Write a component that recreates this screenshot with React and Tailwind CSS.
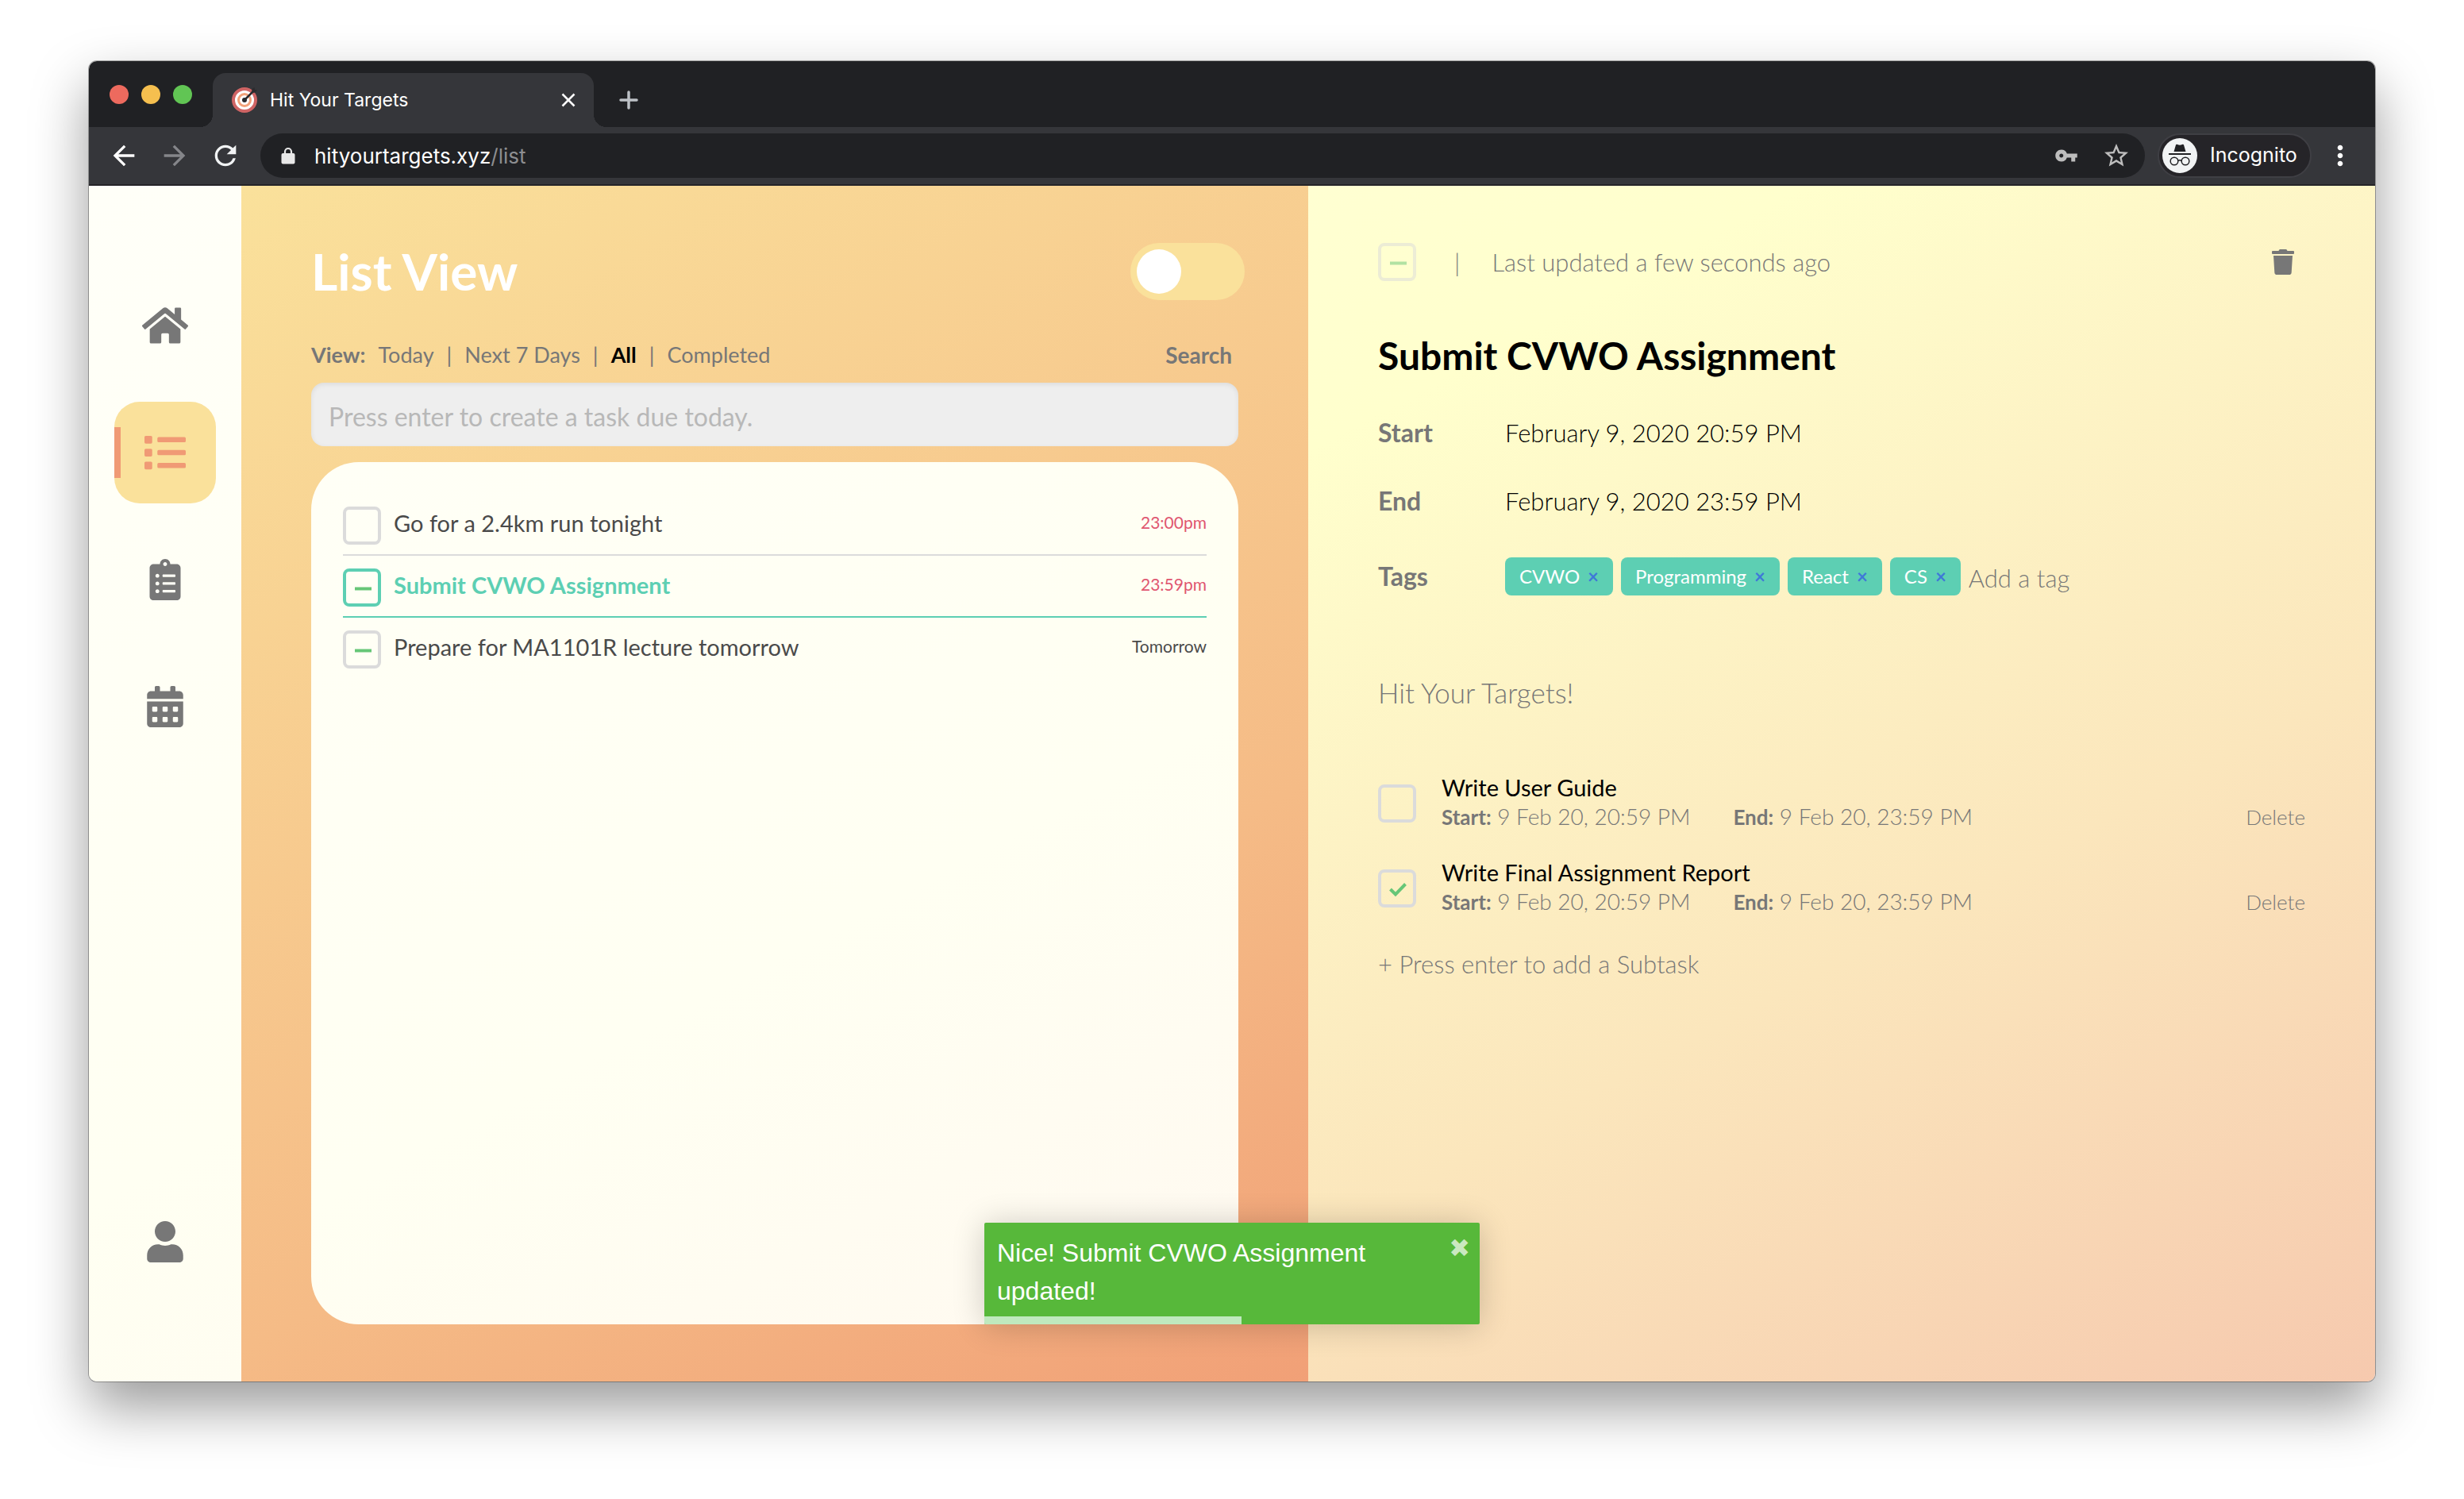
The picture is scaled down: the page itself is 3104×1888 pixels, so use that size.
import React, { useState } from "react";
import { FaHome, FaList, FaClipboardList, FaCalendarAlt, FaUser, FaTrash } from "react-icons/fa";
import { MdArrowBack, MdArrowForward, MdRefresh, MdVpnKey, MdStarBorder, MdMoreVert } from "react-icons/md";

const CHROME_FONT = "font-['Inter','Liberation_Sans',sans-serif]";

function TargetIcon() {
  return (
    <svg viewBox="0 0 32 32" className="size-8 overflow-visible" aria-hidden="true">
      <circle cx="16" cy="16" r="14" fill="#fff" stroke="#cf6464" strokeWidth="4" />
      <circle cx="16" cy="16" r="7.5" fill="#fff" stroke="#f2a27a" strokeWidth="3" />
      <circle cx="16" cy="16" r="3" fill="#2b2b2e" />
      <path d="M16 16L28 4" stroke="#2b2b2e" strokeWidth="2.5" />
      <path d="M25 7l.5-5L28.500 0l.5 3 3 .5-2.500 3z" fill="#2b2b2e" />
    </svg>
  );
}

function LockIcon() {
  return (
    <svg viewBox="0 0 18 22" className="h-[22px] w-[18px]" aria-hidden="true">
      <path d="M5 10V6a4 4 0 0 1 8 0v4" fill="none" stroke="#e8e8e8" strokeWidth="2.200" />
      <rect x="0.500" y="8" width="17" height="13.500" rx="2" fill="#e8e8e8" />
    </svg>
  );
}

function IncognitoIcon() {
  return (
    <svg viewBox="0 0 44 44" className="size-11" aria-hidden="true">
      <circle cx="22" cy="22" r="22" fill="#f1f3f4" />
      <path d="M17 8.500c.4-.8 1.200-.8 2-.4 2 .9 4 .9 6 0 .8-.4 1.600-.4 2 .4L29.500 17h-15z" fill="#202124" />
      <path d="M8 20h28" stroke="#202124" strokeWidth="1.800" />
      <circle cx="15" cy="29" r="4.800" fill="none" stroke="#202124" strokeWidth="1.500" />
      <circle cx="29" cy="29" r="4.800" fill="none" stroke="#202124" strokeWidth="1.500" />
      <path d="M19.800 28.500q2.200-1.500 4.400 0" fill="none" stroke="#202124" strokeWidth="1.500" />
    </svg>
  );
}

function TabStrip() {
  return (
    <div className="flex h-[83px] items-end bg-[#202124]">
      <div className="flex h-[68px] items-center gap-4 self-end pl-[26px]">
        <span className="-mt-[14px] size-6 rounded-full bg-[#ed6a5e]" />
        <span className="-mt-[14px] size-6 rounded-full bg-[#f5bf4f]" />
        <span className="-mt-[14px] size-6 rounded-full bg-[#61c554]" />
      </div>
      <div className="relative ml-[26px] flex h-[68px] w-[480px] items-center rounded-t-2xl bg-[#35363a] pl-6 pr-[22px] before:absolute before:-left-4 before:bottom-0 before:size-4 before:bg-[radial-gradient(circle_at_0_0,transparent_16px,#35363a_16px)] after:absolute after:-right-4 after:bottom-0 after:size-4 after:bg-[radial-gradient(circle_at_100%_0,transparent_16px,#35363a_16px)]">
        <TargetIcon />
        <span className="ml-4 flex-1 text-[23px] text-white">Hit Your Targets</span>
        <button aria-label="Close tab">
          <svg viewBox="0 0 20 20" className="size-5" stroke="#fff" strokeWidth="2.500">
            <path d="M2.500 2.500l15 15M17.500 2.500l-15 15" />
          </svg>
        </button>
      </div>
      <button aria-label="New tab" className="mb-[22px] ml-8">
        <svg viewBox="0 0 24 24" className="size-6" stroke="#bdc1c6" strokeWidth="3.500" strokeLinecap="round">
          <path d="M12 2v20M2 12h20" />
        </svg>
      </button>
    </div>
  );
}

function Toolbar() {
  return (
    <div className="flex h-[74px] items-center border-b-2 border-[#252428] bg-[#35363a] px-6">
      <div className="flex gap-6">
        <button aria-label="Back"><MdArrowBack className="size-10 text-white" /></button>
        <button aria-label="Forward"><MdArrowForward className="size-10 text-[#85868a]" /></button>
        <button aria-label="Reload"><MdRefresh className="size-10 text-[#f1f3f4]" /></button>
      </div>
      <div className="ml-6 flex h-14 flex-1 items-center rounded-full bg-[#202124] pl-[26px] pr-[18px]">
        <LockIcon />
        <span className="ml-6 flex-1 text-[26px] text-white">
          hityourtargets.xyz<span className="text-[#8d8e91]">/list</span>
        </span>
        <button aria-label="Saved passwords"><MdVpnKey className="size-[30px] text-[#bdbdbd]" /></button>
        <button aria-label="Bookmark" className="ml-[30px]"><MdStarBorder className="size-9 text-[#bdbdbd]" /></button>
      </div>
      <div className="ml-4 flex h-14 w-[194px] items-center gap-4 rounded-full border-2 border-[#3f3f44] bg-[#252428] pl-1">
        <IncognitoIcon />
        <span className="text-[25px] text-white">Incognito</span>
      </div>
      <button aria-label="Browser menu" className="ml-4"><MdMoreVert className="size-10 text-white" /></button>
    </div>
  );
}

function NavItem({ icon: Icon, label, active, wide }) {
  return (
    <a
      href="#"
      aria-label={label}
      className={
        active
          ? "flex h-32 w-full items-center justify-center rounded-[32px] bg-[#fae19b] text-[#f09a75] bg-[linear-gradient(#f09a75,#f09a75)] bg-[length:8px_64px] bg-[position:left_center] bg-no-repeat"
          : "flex h-32 w-full items-center justify-center rounded-[32px] text-[#777]"
      }
    >
      <Icon className={wide ? "h-[52px] w-[58px]" : "size-[52px]"} />
    </a>
  );
}

function Sidebar() {
  return (
    <nav className="flex w-48 flex-col gap-8 bg-[linear-gradient(152deg,#fffff8,#fffff2_80%,#fffdf1)] px-8 py-28">
      <NavItem icon={FaHome} label="Home" wide />
      <NavItem icon={FaList} label="List" active />
      <NavItem icon={FaClipboardList} label="Tasks" />
      <NavItem icon={FaCalendarAlt} label="Calendar" />
      <div className="mt-auto">
        <NavItem icon={FaUser} label="Profile" />
      </div>
    </nav>
  );
}

function CheckBox({ label, mark, selected, faded }) {
  return (
    <label className={faded ? "grid size-12 shrink-0 opacity-50" : "grid size-12 shrink-0"}>
      <input
        type="checkbox"
        aria-label={label}
        defaultChecked={mark === "check"}
        className={
          selected
            ? "col-start-1 row-start-1 size-12 appearance-none rounded-lg border-4 border-[#5dcfb3]"
            : "col-start-1 row-start-1 size-12 appearance-none rounded-lg border-4 border-[#dbdbdb]"
        }
      />
      <svg viewBox="0 0 48 48" className="pointer-events-none col-start-1 row-start-1 size-12" fill="none" stroke="#66c677">
        {mark === "dash" && <path d="M15 25.500h21" strokeWidth="4" />}
        {mark === "check" && <path d="M15.500 25l6.500 6.500L34.500 18.500" strokeWidth="4" />}
      </svg>
    </label>
  );
}

const TASKS = [
  { title: "Go for a 2.4km run tonight", due: "23:00pm", late: true },
  { title: "Submit CVWO Assignment", due: "23:59pm", late: true, mark: "dash", selected: true },
  { title: "Prepare for MA1101R lecture tomorrow", due: "Tomorrow", mark: "dash" },
];

function TaskRow({ task, last }) {
  const line = last ? "border-transparent" : task.selected ? "border-[#5dcfb3]" : "border-[#dbdbdb]";
  return (
    <li className={`flex items-start border-b-2 pb-3 pt-4 ${line}`}>
      <CheckBox label={task.title} mark={task.mark} selected={task.selected} />
      <span className={`ml-4 flex-1 text-[29px] leading-[42px] ${task.selected ? "font-bold text-[#5dcfb3]" : "text-[#4a4a4a]"}`}>
        {task.title}
      </span>
      <span className={`text-[21px] leading-10 ${task.late ? "text-[#e05670]" : "text-[#4a4a4a]"}`}>{task.due}</span>
    </li>
  );
}

function ListPanel() {
  return (
    <section className="flex flex-1 flex-col bg-[linear-gradient(152deg,#fae19b,#f5bb86_66%,#f1a077)] px-[88px] py-[72px]">
      <header className="flex h-[72px] items-center justify-between">
        <h1 className="text-[64px] font-bold leading-[72px] text-white">List View</h1>
        <button role="switch" aria-checked="false" aria-label="Toggle view" className="-mr-2 h-[72px] w-36 rounded-full bg-[#fae19b] p-2">
          <span className="block size-14 rounded-full bg-white" />
        </button>
      </header>
      <div className="mt-12 flex gap-4 text-[27px] leading-[42px] text-[#777]">
        <span className="font-bold">View:</span>
        <button>Today</button>
        <span>|</span>
        <button>Next 7 Days</button>
        <span>|</span>
        <button className="font-bold text-black">All</button>
        <span>|</span>
        <button>Completed</button>
        <button className="ml-auto mr-2 text-[28px] font-bold">Search</button>
      </div>
      <input
        type="text"
        aria-label="New task"
        placeholder="Press enter to create a task due today."
        className="mt-[14px] h-20 w-full rounded-2xl bg-[#eee] px-[22px] pt-1 text-[32px] text-[#4a4a4a] shadow-[inset_0_2px_6px_rgba(0,0,0,0.08)] placeholder:text-[#b8b8b8]"
      />
      <ul className="mt-5 flex-1 rounded-[60px] bg-[linear-gradient(152deg,#fffff6,#fffff2_55%,#fff9f0)] p-10">
        {TASKS.map((task, i) => (
          <TaskRow key={task.title} task={task} last={i === TASKS.length - 1} />
        ))}
      </ul>
    </section>
  );
}

const SUBTASKS = [
  { title: "Write User Guide" },
  { title: "Write Final Assignment Report", mark: "check" },
];

function Subtask({ title, mark }) {
  return (
    <li className="flex items-start">
      <div className="mt-[14px]">
        <CheckBox label={title} mark={mark} />
      </div>
      <div className="ml-8 flex-1 leading-9 text-[#777]">
        <p className="text-[29px] text-black">{title}</p>
        <div className="flex text-[28px] font-light">
          <span><strong className="text-[26px] font-bold">Start:</strong> 9 Feb 20, 20:59 PM</span>
          <span className="ml-[54px]"><strong className="text-[26px] font-bold">End:</strong> 9 Feb 20, 23:59 PM</span>
          <button className="ml-auto text-[26px]">Delete</button>
        </div>
      </div>
    </li>
  );
}

function DetailPanel() {
  const [note, setNote] = useState("Hit Your Targets!");
  return (
    <section className="flex-1 bg-[linear-gradient(152deg,#ffffd2_0%,#ffffcd_15%,#fbe6bc_60%,#f6c9ae_100%)] px-[88px] py-[72px]">
      <div className="flex h-12 items-center text-[31px] font-light text-[#777]">
        <CheckBox label="Mark task as complete" mark="dash" faded />
        <span className="ml-12">|</span>
        <span className="ml-10">Last updated a few seconds ago</span>
        <button aria-label="Delete task" className="ml-auto mr-[14px]"><FaTrash className="h-8 w-7 text-[#777]" /></button>
      </div>
      <h2 className="mt-16 text-[48px] font-bold leading-[60px]">Submit CVWO Assignment</h2>
      <dl className="mt-6 grid grid-cols-[160px_1fr] items-center text-[31px]">
        <dt className="text-[32px] font-bold leading-[86px] text-[#777]">Start</dt>
        <dd className="font-light leading-[86px]">February 9, 2020 20:59 PM</dd>
        <dt className="text-[32px] font-bold leading-[86px] text-[#777]">End</dt>
        <dd className="font-light leading-[86px]">February 9, 2020 23:59 PM</dd>
        <dt className="text-[32px] font-bold leading-[104px] text-[#777]">Tags</dt>
        <dd className="flex items-center gap-[10px]">
          {["CVWO", "Programming", "React", "CS"].map((tag) => (
            <span key={tag} className="flex h-12 items-center gap-[10px] rounded-lg bg-[#5dcfb3] px-[18px] text-[24px] text-white">
              {tag}
              <button aria-label={`Remove ${tag}`} className="font-bold text-[#3f78d8]">×</button>
            </span>
          ))}
          <input
            type="text"
            aria-label="Add a tag"
            placeholder="Add a tag"
            className="min-w-0 flex-1 bg-transparent pt-1 font-light placeholder:text-[#777]"
          />
        </dd>
      </dl>
      <input
        type="text"
        aria-label="Description"
        value={note}
        onChange={(e) => setNote(e.target.value)}
        className="mt-[68px] block h-[52px] w-full bg-transparent text-[35px] font-light text-[#777]"
      />
      <ul className="mt-[76px] flex flex-col gap-[34px]">
        {SUBTASKS.map((s) => (
          <Subtask key={s.title} {...s} />
        ))}
      </ul>
      <input
        type="text"
        aria-label="New subtask"
        placeholder="+ Press enter to add a Subtask"
        className="mt-9 block h-12 w-full bg-transparent text-[31px] font-light placeholder:text-[#777]"
      />
    </section>
  );
}

function Toast() {
  return (
    <div
      role="status"
      className="absolute bottom-[72px] left-1/2 h-32 w-[624px] -translate-x-1/2 overflow-hidden rounded-xs bg-[#57b83a] px-4 py-[14px] font-['Liberation_Sans',Arial,sans-serif] text-[32px] leading-[48px] text-white shadow-[0_2px_40px_rgba(0,0,0,0.2)]"
    >
      <div className="flex items-start justify-between">
        <p className="w-[500px]">Nice! Submit CVWO Assignment updated!</p>
        <button aria-label="Dismiss" className="mt-[2px] -mr-1 font-['DejaVu_Sans',sans-serif] text-[32px] leading-8 text-white/70">✖</button>
      </div>
      <span className="absolute bottom-0 left-0 h-[10px] w-[52%] bg-[#bfe9be]" />
    </div>
  );
}

export default function App() {
  return (
    <div className="flex min-h-screen flex-col bg-white px-28 pb-[148px] pt-[77px] font-['Lato',sans-serif]">
      <div className="relative flex flex-1 flex-col overflow-hidden rounded-[10px] shadow-[0_0_0_1px_rgba(0,0,0,0.3),0_32px_70px_rgba(0,0,0,0.4)]">
        <div className={CHROME_FONT}>
          <TabStrip />
          <Toolbar />
        </div>
        <main className="flex flex-1">
          <Sidebar />
          <ListPanel />
          <DetailPanel />
        </main>
        <Toast />
      </div>
    </div>
  );
}
